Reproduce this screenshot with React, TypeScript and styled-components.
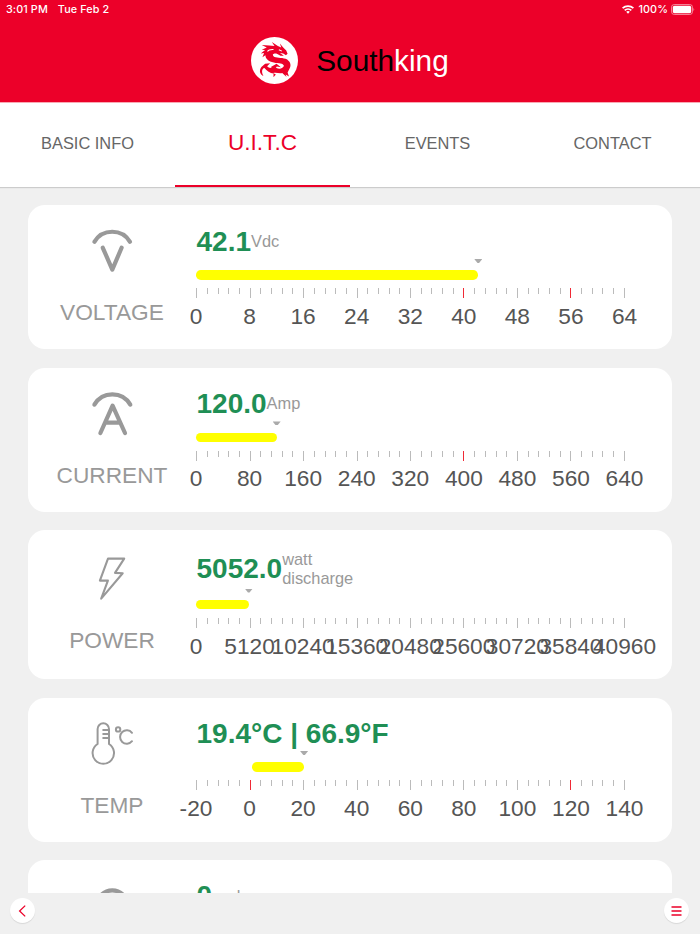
import React, { FC, ReactNode } from 'react'
import styled, { createGlobalStyle } from 'styled-components'

const palette = {
  red: '#ec0029',
  green: '#1f8f55',
  yellow: '#ffff00',
  gray: '#999999',
  darkGray: '#555555',
  background: '#f0f0f0',
}

const GlobalStyle = createGlobalStyle`
  * {
    box-sizing: border-box;
  }
  body {
    margin: 0;
    background-color: ${palette.background};
    font-family: 'Liberation Sans', Arial, sans-serif;
  }
`

const Container = styled.div`
  display: flex;
  flex-direction: column;
  height: 934px;
  overflow: hidden;
  background-color: ${palette.background};
`

const Header = styled.header`
  flex: none;
  height: 103px;
  background-color: ${palette.red};
  border-bottom: 1px solid #f9a9b3;
`

const StatusBar = styled.div`
  display: flex;
  justify-content: space-between;
  align-items: center;
  height: 18px;
  padding: 0 5px 0 6px;
  color: white;
  font-family: Inter, sans-serif;
  font-size: 10.8px;
  font-weight: 500;
  letter-spacing: 0.1px;

  .status-bar-group {
    display: flex;
    align-items: center;
  }
  .status-bar-date {
    margin-left: 10px;
  }
  .status-bar-battery-text {
    margin: 0 3px 0 4px;
  }
`

const Brand = styled.div`
  display: flex;
  justify-content: center;
  align-items: center;
  height: 84px;
  color: white;
  font-size: 29.8px;

  svg {
    margin-right: 18px;
  }
  span {
    padding-top: 2px;
  }
  .brand-dark {
    color: black;
  }
`

const Tabs = styled.nav`
  position: relative;
  z-index: 1;
  flex: none;
  display: flex;
  height: 84px;
  background-color: white;
  box-shadow: 0 1px 1px rgba(0, 0, 0, 0.15);
`

const Tab = styled.button<{ $active?: boolean }>`
  flex: 1;
  padding: 0 0 2px;
  border: 0;
  border-bottom: 2px solid ${({ $active }) => ($active ? palette.red : 'transparent')};
  outline: none;
  background: none;
  font-family: inherit;
  font-size: ${({ $active }) => ($active ? '22.6px' : '16.4px')};
  color: ${({ $active }) => ($active ? palette.red : '#666666')};
`

const CardList = styled.main`
  flex: 1;
  min-height: 0;
  overflow: hidden;
  display: flex;
  flex-direction: column;
  gap: 18.6px;
  padding: 18.4px 28px 0;
`

const Card = styled.section`
  flex: none;
  display: flex;
  border-radius: 17px;
  background-color: white;
`

const CardTitle = styled.div`
  display: flex;
  flex-direction: column;
  justify-content: center;
  align-items: center;
  width: 168px;
  color: ${palette.gray};
  font-size: 22.7px;
  line-height: 26px;

  svg {
    display: block;
    margin-bottom: 26.2px;
  }
`

const Gauge = styled.div`
  width: 429px;
  padding: 19.1px 0 20.4px;
`

const Reading = styled.div`
  display: flex;
  align-items: center;
  min-height: 34.4px;
  padding-left: 0.5px;
  color: ${palette.green};
  font-size: 28px;
  font-weight: bold;
  white-space: nowrap;
`

const Unit = styled.span`
  color: ${palette.gray};
  font-size: 16.4px;
  font-weight: normal;
  line-height: 19.5px;
  white-space: pre;
`

const Pointer = styled.div`
  width: 8px;
  height: 4px;
  background-color: #aaaaaa;
  clip-path: polygon(0 0, 100% 0, 60% 100%, 40% 100%);
`

const Bar = styled.div`
  height: 9.6px;
  margin-top: 7.1px;
  border-radius: 4.8px;
  background-color: ${palette.yellow};
`

const Ticks = styled.div`
  display: flex;
  justify-content: space-between;
  height: 10px;
  margin: 8.7px -0.3px 0 0.3px;
`

const Tick = styled.i<{ $major: boolean; $alert: boolean }>`
  flex: none;
  width: 1px;
  height: ${({ $major }) => ($major ? 10 : 6)}px;
  background-color: ${({ $alert }) => ($alert ? '#f02a36' : '#bbbbbb')};
`

const Labels = styled.div`
  display: flex;
  justify-content: space-between;
  min-height: 26px;
  margin-top: 4.7px;
  margin-right: 0.5px;
  color: ${palette.darkGray};
  font-size: 22.7px;
  line-height: 26px;

  span {
    display: flex;
    justify-content: center;
    width: 0;
  }
`

const Footer = styled.footer`
  flex: none;
  display: flex;
  justify-content: space-between;
  height: 41px;
  padding: 5px 11px 0 10px;
`

const RoundButton = styled.button`
  display: flex;
  justify-content: center;
  align-items: center;
  width: 25px;
  height: 25px;
  padding: 0;
  border: 0;
  border-radius: 50%;
  outline: none;
  background-color: white;
  box-shadow: 0 1px 1px rgba(0, 0, 0, 0.1);
`

const DragonLogo: FC = () => (
  <svg width="47" height="47" viewBox="0 0 140 140">
    <circle cx="70" cy="70" r="70" fill="white" />
    <g fill={palette.red}>
      <path d="M32 24 L54 25 L70 27 L62 15 L80 27 L90 31 L86 19 L96 31 L105 40 L109 50 L104 54 L96 49 L86 48 L98 56 L88 56 L77 50 C68 48 62 52 67 57 C74 63 90 60 103 65 C117 71 121 84 115 94 L109 106 L113 118 L103 112 L106 119 L93 107 C85 110 76 104 66 107 L74 112 L67 120 L67 109 C57 107 47 101 40 92 C32 94 31 104 37 116 C25 110 24 98 31 89 L42 80 L57 78 L48 87 C57 96 67 91 76 92 C84 97 96 94 98 86 C96 77 83 80 68 76 C52 72 43 65 43 54 L34 60 L39 48 L29 49 L42 39 L32 38 L47 31 Z" />
      <path d="M58 90 L76 80 L89 90 L77 88 L71 96 Z" />
    </g>
    <path d="M83 38 L92 42 M49 43 C53 36 61 37 67 37" fill="none" stroke="white" strokeWidth="3" />
  </svg>
)

const WifiIcon: FC = () => (
  <svg width="12" height="9" viewBox="0 0 12 9">
    <g fill="none" stroke="white" strokeWidth="1.7">
      <path d="M0.6 3.2 A7.8 7.8 0 0 1 11.4 3.2" />
      <path d="M2.7 5.4 A4.8 4.8 0 0 1 9.3 5.4" />
    </g>
    <path d="M4.2 6.8 A2.6 2.6 0 0 1 7.8 6.8 L6 8.8 Z" fill="white" />
  </svg>
)

const BatteryIcon: FC = () => (
  <svg width="24" height="11" viewBox="0 0 24 11">
    <rect x="0.5" y="0.5" width="21" height="10" rx="2.8" fill="none" stroke="white" strokeOpacity="0.5" />
    <rect x="1.8" y="1.8" width="18.4" height="7.4" rx="1.6" fill="white" />
    <path d="M22.5 3.8 Q24 5.5 22.5 7.2 Z" fill="white" fillOpacity="0.6" />
  </svg>
)

const CardIcon: FC<{ strokeWidth: number; children: ReactNode }> = ({ strokeWidth, children }) => (
  <svg
    width="44"
    height="44"
    viewBox="0 0 44 44"
    fill="none"
    stroke={palette.gray}
    strokeWidth={strokeWidth}
    strokeLinecap="round"
    strokeLinejoin="round"
  >
    {children}
  </svg>
)

const VoltageIcon = (
  <CardIcon strokeWidth={4.2}>
    <path d="M4.4 12.8 A20.8 20.8 0 0 1 40 12.8" />
    <path d="M12.8 18.8 L22.3 40.6 L31.6 18.8" />
  </CardIcon>
)

const CurrentIcon = (
  <CardIcon strokeWidth={4.2}>
    <path d="M4.4 12.6 A20.8 20.8 0 0 1 40.3 12.6" />
    <path d="M10.4 41 L22.6 13.6 L35 41 M15.2 30.7 H30" />
  </CardIcon>
)

const PowerIcon = (
  <CardIcon strokeWidth={2.1}>
    <path d="M18 1.6 H34.2 L25 15.9 L32.7 16.2 L11.2 41.6 L17.9 23.6 H9.9 Z" />
  </CardIcon>
)

const TempIcon = (
  <CardIcon strokeWidth={2}>
    <path d="M7.6 23 V8 A5.7 5.7 0 0 1 19 8 V23 A10.7 10.7 0 1 1 7.6 23 Z" />
    <path d="M13.2 9 H18.6 M13.2 13 H18.6 M13.2 17 H18.6" />
    <circle cx="28.1" cy="8.4" r="2.2" />
    <path d="M42 11.8 A6.7 6.7 0 1 0 42 20.2" />
  </CardIcon>
)

const CyclesIcon = (
  <CardIcon strokeWidth={4.2}>
    <circle cx="22.3" cy="22" r="15.6" />
  </CardIcon>
)

type GaugeType = {
  title: string
  icon: ReactNode
  value: string
  unit?: string
  labels: number[]
  alerts: number[]
  // bar start and end, in percent of the scale
  start: number
  end: number
}

const gauges: GaugeType[] = [
  {
    title: 'VOLTAGE',
    icon: VoltageIcon,
    value: '42.1',
    unit: 'Vdc',
    labels: [0, 8, 16, 24, 32, 40, 48, 56, 64],
    alerts: [40, 56],
    start: 0,
    end: 65.8,
  },
  {
    title: 'CURRENT',
    icon: CurrentIcon,
    value: '120.0',
    unit: 'Amp',
    labels: [0, 80, 160, 240, 320, 400, 480, 560, 640],
    alerts: [400],
    start: 0,
    end: 18.8,
  },
  {
    title: 'POWER',
    icon: PowerIcon,
    value: '5052.0',
    unit: 'watt\ndischarge',
    labels: [0, 5120, 10240, 15360, 20480, 25600, 30720, 35840, 40960],
    alerts: [],
    start: 0,
    end: 12.3,
  },
  {
    title: 'TEMP',
    icon: TempIcon,
    value: '19.4°C | 66.9°F',
    labels: [-20, 0, 20, 40, 60, 80, 100, 120, 140],
    alerts: [0, 120],
    start: 13.1,
    end: 25.2,
  },
  {
    title: 'CYCLES',
    icon: CyclesIcon,
    value: '0',
    unit: 'cycles',
    labels: [],
    alerts: [],
    start: 0,
    end: 0,
  },
]

const MINOR_TICKS = 5

const GaugeCard: FC<{ gauge: GaugeType }> = ({ gauge }) => {
  const { title, icon, value, unit, labels, alerts, start, end } = gauge
  const tickCount = labels.length ? (labels.length - 1) * MINOR_TICKS + 1 : 0

  return (
    <Card>
      <CardTitle>
        {icon}
        {title}
      </CardTitle>
      <Gauge>
        <Reading>
          {value}
          {unit && <Unit>{unit}</Unit>}
        </Reading>
        <Pointer style={{ marginLeft: `calc(${end}% - 4px)` }} />
        <Bar style={{ marginLeft: `${start}%`, width: `${end - start}%` }} />
        <Ticks>
          {Array.from({ length: tickCount }, (_, index) => {
            const major = index % MINOR_TICKS === 0
            return <Tick key={index} $major={major} $alert={major && alerts.includes(labels[index / MINOR_TICKS])} />
          })}
        </Ticks>
        <Labels>
          {labels.map((label) => (
            <span key={label}>{label}</span>
          ))}
        </Labels>
      </Gauge>
    </Card>
  )
}

const App: FC = () => (
  <>
    <GlobalStyle />
    <Container>
      <Header>
        <StatusBar>
          <div className="status-bar-group">
            <span>3:01 PM</span>
            <span className="status-bar-date">Tue Feb 2</span>
          </div>
          <div className="status-bar-group">
            <WifiIcon />
            <span className="status-bar-battery-text">100%</span>
            <BatteryIcon />
          </div>
        </StatusBar>
        <Brand>
          <DragonLogo />
          <span className="brand-dark">South</span>
          <span>king</span>
        </Brand>
      </Header>

      <Tabs>
        <Tab type="button">BASIC INFO</Tab>
        <Tab type="button" $active>
          U.I.T.C
        </Tab>
        <Tab type="button">EVENTS</Tab>
        <Tab type="button">CONTACT</Tab>
      </Tabs>

      <CardList>
        {gauges.map((gauge) => (
          <GaugeCard key={gauge.title} gauge={gauge} />
        ))}
      </CardList>

      <Footer>
        <RoundButton type="button">
          <svg width="12" height="14" viewBox="0 0 12 14" fill="none" stroke={palette.red} strokeWidth="1.3">
            <path d="M8.2 1.6 L2.6 7 L8.2 12.4" />
          </svg>
        </RoundButton>
        <RoundButton type="button">
          <svg width="11" height="12" viewBox="0 0 11 12" stroke={palette.red} strokeWidth="1.3">
            <path d="M0.5 2 H10.5 M0.5 6 H10.5 M0.5 10 H10.5" />
          </svg>
        </RoundButton>
      </Footer>
    </Container>
  </>
)

export default App
